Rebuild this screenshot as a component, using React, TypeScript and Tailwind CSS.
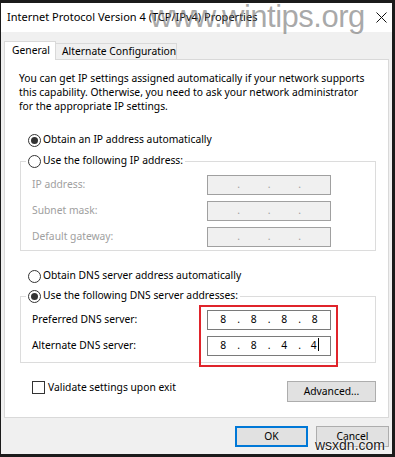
import { Fragment } from 'react';

function Radio({ checked }: { checked?: boolean }) {
  return (
    <span className="flex h-[13px] w-[13px] shrink-0 items-center justify-center rounded-full border border-[#333333] bg-white">
      {checked && <span className="h-[7px] w-[7px] rounded-full bg-[#333333]" />}
    </span>
  );
}

function IpField({ values, disabled, cursor }: { values?: string[]; disabled?: boolean; cursor?: boolean }) {
  return (
    <div
      className={`flex h-[20px] w-[124px] items-center border ${
        disabled ? 'border-[#a0a0a0] bg-[#f0f0f0] text-[#a0a0a0]' : 'border-[#7a7a7a] bg-white text-black'
      }`}
    >
      {[0, 1, 2, 3].map((i) => (
        <Fragment key={i}>
          {i > 0 && <span className="flex w-0 justify-center">.</span>}
          <span className="relative flex flex-1 justify-center">
            {values?.[i]}
            {cursor && i === 3 && <span className="ml-[1px] h-[13px] w-px bg-black" />}
          </span>
        </Fragment>
      ))}
    </div>
  );
}

function Button({ label, primary, className = '' }: { label: string; primary?: boolean; className?: string }) {
  return (
    <div
      className={`flex h-[21px] items-center justify-center bg-[#e1e1e1] ${
        primary ? 'border-2 border-[#0078d7]' : 'border border-[#adadad]'
      } ${className}`}
    >
      {label}
    </div>
  );
}

export default function App() {
  return (
    <div className="relative h-[457px] w-[395px] overflow-hidden bg-[#1b1b1b] pb-[3px] pl-px pr-[3px] pt-[3px] font-['Noto_Sans','Liberation_Sans',sans-serif] text-[10.3px] text-black">
      <div className="flex h-full flex-col bg-[#f0f0f0]">
        {/* Title bar */}
        <div className="flex h-[29px] items-center justify-between bg-white pl-[6px] pr-[5px] text-[11px]">
          <span>Internet Protocol Version 4 (TCP/IPv4) Properties</span>
          <svg width="11" height="11" viewBox="0 0 11 11" className="mb-px">
            <path d="M0.5 0.5 L10.5 10.5 M10.5 0.5 L0.5 10.5" stroke="#111" strokeWidth="1" />
          </svg>
        </div>

        {/* Body */}
        <div className="flex flex-1 flex-col px-[3px] pb-[7px] pt-[9px]">
          {/* Tabs */}
          <div className="relative z-10 -mb-px flex items-end whitespace-nowrap">
            <div className="flex h-[19px] w-[52px] items-center border border-b-0 border-[#d9d9d9] bg-white pl-[7px]">
              General
            </div>
            <div className="mb-px flex h-[16px] w-[121px] items-center border border-b-0 border-l-0 border-[#d9d9d9] bg-[#f0f0f0] pl-[6px]">
              Alternate Configuration
            </div>
          </div>

          {/* Panel */}
          <div className="relative flex flex-1 flex-col border border-[#d9d9d9] bg-white pl-[14px] pt-[11px]">
            <p className="whitespace-nowrap leading-[14px]">
              You can get IP settings assigned automatically if your network supports
              <br />
              this capability. Otherwise, you need to ask your network administrator
              <br />
              for the appropriate IP settings.
            </p>

            <div className="ml-[9px] mt-[19px] flex h-[16px] items-center gap-[2px]">
              <Radio checked />
              <span>Obtain an IP address automatically</span>
            </div>

            <fieldset className="ml-px mt-[5px] w-[356px] border border-[#dcdcdc] pb-[3px]">
              <legend className="ml-[5px] flex h-[16px] items-center gap-[2px] px-[2px]">
                <Radio />
                <span>Use the following IP address:</span>
              </legend>
              <div className="mt-[6px] flex flex-col gap-[6px] pl-[11px] text-[#a0a0a0]">
                {['IP address:', 'Subnet mask:', 'Default gateway:'].map((label) => (
                  <div key={label} className="flex h-[20px] items-center">
                    <span className="w-[175px]">{label}</span>
                    <IpField disabled />
                  </div>
                ))}
              </div>
            </fieldset>

            <div className="ml-[9px] mt-[17px] flex h-[16px] items-center gap-[2px]">
              <Radio />
              <span>Obtain DNS server address automatically</span>
            </div>

            <fieldset className="ml-px mt-[4px] w-[356px] border border-[#dcdcdc] pb-[6px]">
              <legend className="ml-[5px] flex h-[16px] items-center gap-[2px] px-[2px]">
                <Radio checked />
                <span>Use the following DNS server addresses:</span>
              </legend>
              <div className="mt-[6px] flex flex-col gap-[6px] pl-[11px]">
                <div className="flex h-[20px] items-center">
                  <span className="w-[175px]">Preferred DNS server:</span>
                  <IpField values={['8', '8', '8', '8']} />
                </div>
                <div className="flex h-[20px] items-center">
                  <span className="w-[175px]">Alternate DNS server:</span>
                  <IpField values={['8', '8', '4', '4']} cursor />
                </div>
              </div>
            </fieldset>

            <div className="mr-[12px] mt-[17px] flex items-start justify-between">
              <div className="ml-[13px] flex items-center gap-[3px]">
                <span className="h-[13px] w-[13px] border border-[#333333] bg-white" />
                <span>Validate settings upon exit</span>
              </div>
              <Button label="Advanced..." className="mt-px w-[89px]" />
            </div>

            {/* red highlight */}
            <div className="absolute left-[194px] top-[245px] h-[62px] w-[139px] border-2 border-[#e0242b]" />
          </div>

          {/* Dialog buttons */}
          <div className="mt-[8px] flex justify-end gap-[8px]">
            <Button label="OK" primary className="w-[73px]" />
            <Button label="Cancel" className="w-[73px]" />
          </div>
        </div>
      </div>

      {/* watermarks */}
      <span className="pointer-events-none absolute left-[150px] top-[-6px] font-['Liberation_Sans',sans-serif] text-[31px] tracking-[-0.5px] text-[#6f6f6f]/60">
        www.wintips.org
      </span>
      <span className="pointer-events-none absolute bottom-[1px] right-[10px] font-['Liberation_Sans',sans-serif] text-[14px] text-[#222] [text-shadow:0_0_2px_#fff,0_0_2px_#fff]">
        wsxdn.com
      </span>
    </div>
  );
}
